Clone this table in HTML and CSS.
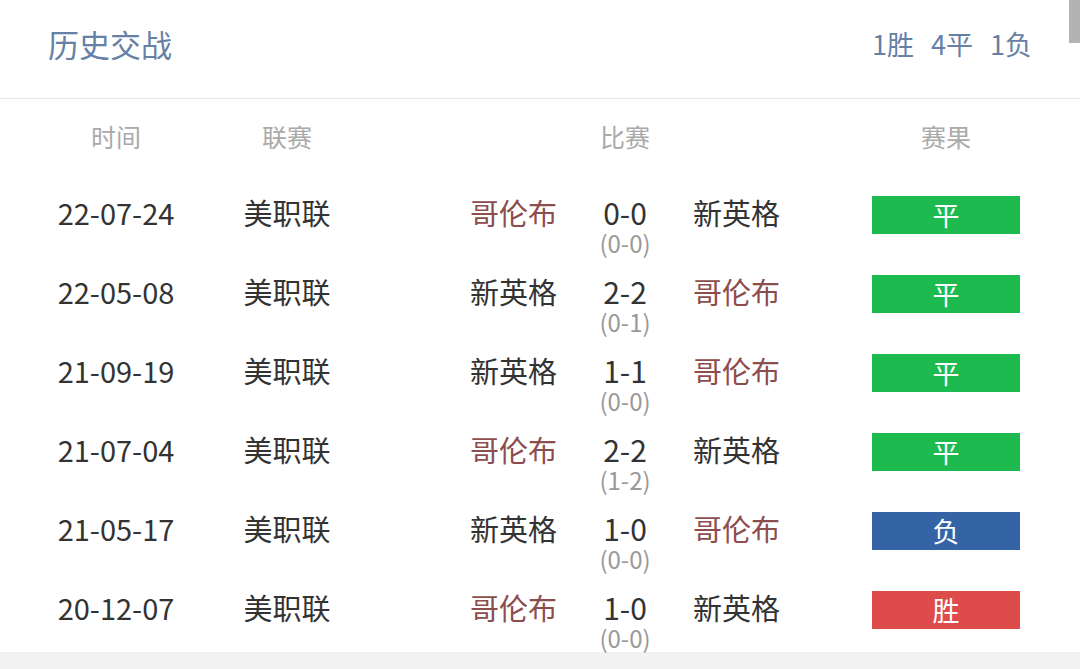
FILE: index.html
```html
<!DOCTYPE html>
<html lang="zh-CN">
<head>
<meta charset="utf-8">
<title>历史交战</title>
<link rel="stylesheet" href="styles.css">
</head>
<body>
<div class="page">
  <header class="head">
    <div class="title">历史交战</div>
    <div class="stats"><span>1胜</span><span>4平</span><span>1负</span></div>
  </header>
  <div class="thumb"></div>
  <div class="table">
    <div class="thead">
      <div class="c-date">时间</div>
      <div class="c-league">联赛</div>
      <div class="c-score">比赛</div>
      <div class="c-res">赛果</div>
    </div>

    <div class="row">
      <div class="c-date">22-07-24</div>
      <div class="c-league">美职联</div>
      <div class="c-home hl">哥伦布</div>
      <div class="c-score"><div class="ft">0-0</div><div class="ht">(0-0)</div></div>
      <div class="c-away">新英格</div>
      <div class="c-res"><span class="badge draw">平</span></div>
    </div>

    <div class="row">
      <div class="c-date">22-05-08</div>
      <div class="c-league">美职联</div>
      <div class="c-home">新英格</div>
      <div class="c-score"><div class="ft">2-2</div><div class="ht">(0-1)</div></div>
      <div class="c-away hl">哥伦布</div>
      <div class="c-res"><span class="badge draw">平</span></div>
    </div>

    <div class="row">
      <div class="c-date">21-09-19</div>
      <div class="c-league">美职联</div>
      <div class="c-home">新英格</div>
      <div class="c-score"><div class="ft">1-1</div><div class="ht">(0-0)</div></div>
      <div class="c-away hl">哥伦布</div>
      <div class="c-res"><span class="badge draw">平</span></div>
    </div>

    <div class="row">
      <div class="c-date">21-07-04</div>
      <div class="c-league">美职联</div>
      <div class="c-home hl">哥伦布</div>
      <div class="c-score"><div class="ft">2-2</div><div class="ht">(1-2)</div></div>
      <div class="c-away">新英格</div>
      <div class="c-res"><span class="badge draw">平</span></div>
    </div>

    <div class="row">
      <div class="c-date">21-05-17</div>
      <div class="c-league">美职联</div>
      <div class="c-home">新英格</div>
      <div class="c-score"><div class="ft">1-0</div><div class="ht">(0-0)</div></div>
      <div class="c-away hl">哥伦布</div>
      <div class="c-res"><span class="badge lose">负</span></div>
    </div>

    <div class="row">
      <div class="c-date">20-12-07</div>
      <div class="c-league">美职联</div>
      <div class="c-home hl">哥伦布</div>
      <div class="c-score"><div class="ft">1-0</div><div class="ht">(0-0)</div></div>
      <div class="c-away">新英格</div>
      <div class="c-res"><span class="badge win">胜</span></div>
    </div>
  </div>
  <div class="foot"></div>
</div>
</body>
</html>
```

FILE: styles.css
```css
* { box-sizing: border-box; }
html, body { margin: 0; padding: 0; background: #fff; }
body {
  font-family: "Noto Sans CJK SC", "Noto Sans", sans-serif;
  color: #333;
  width: 1080px;
  height: 669px;
  overflow: hidden;
}
.page { position: relative; width: 1080px; }
.head {
  height: 99px;
  border-bottom: 1px solid #e8e8e8;
  display: flex;
  justify-content: space-between;
  align-items: center;
  padding: 0 48px 10px 48px;
  color: #6680a6;
}
.title { font-size: 31px; line-height: 40px; }
.stats { font-size: 27px; line-height: 40px; display: flex; gap: 17px; }
.thumb {
  position: absolute;
  top: 0; right: 0;
  width: 11px; height: 43px;
  background: #b3b3b3;
}
.table { padding-bottom: 5px; }
.thead, .row {
  display: grid;
  grid-template-columns: 232px 110px 215px 136px 179px 148px 60px;
  align-items: start;
}
.thead {
  height: 74px;
  padding-top: 22px;
  font-size: 25px;
  line-height: 30px;
  color: #aaa;
}
.thead .c-date { grid-column: 1; }
.thead .c-league { grid-column: 2; }
.thead .c-score { grid-column: 4; }
.thead .c-res { grid-column: 6; }
.row {
  height: 79px;
  padding-top: 20px;
  font-size: 29px;
  line-height: 38px;
  color: #333;
}
.c-date, .c-league, .c-score, .c-res { text-align: center; white-space: nowrap; }
.c-home { text-align: right; }
.c-away { text-align: left; }
.hl { color: #8c4d4d; }
.ft { font-size: 30px; line-height: 30px; margin-top: 4px; }
.ht { font-size: 24px; line-height: 24px; margin-top: 4px; color: #999; }
.badge {
  display: block;
  height: 38px;
  margin-top: 3px;
  line-height: 38px;
  color: #fff;
  font-size: 27px;
}
.draw { background: #1dbb4f; }
.lose { background: #3464a6; }
.win { background: #de4b4b; }
.foot { height: 30px; background: #f2f2f2; }
```
